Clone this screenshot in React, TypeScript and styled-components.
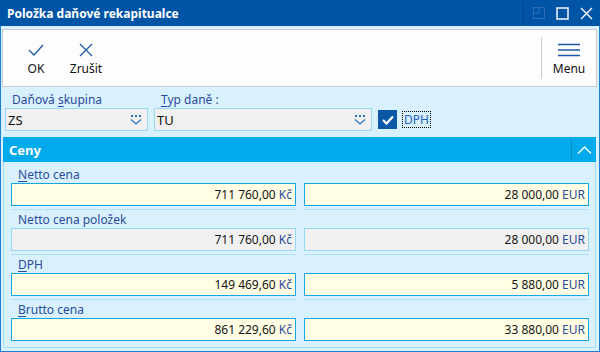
import React from 'react'
import styled, { createGlobalStyle } from 'styled-components'

const GlobalStyle = createGlobalStyle`
  html, body {
    margin: 0;
    padding: 0;
    width: 600px;
    height: 352px;
    overflow: hidden;
    font-family: 'Segoe UI', 'Noto Sans', sans-serif;
  }
`

type Row = {
  label: string
  key?: number
  czk: string
  eur: string
  readOnly?: boolean
}

const rows: Row[] = [
  { label: 'Netto cena', key: 0, czk: '711 760,00', eur: '28 000,00' },
  { label: 'Netto cena položek', czk: '711 760,00', eur: '28 000,00', readOnly: true },
  { label: 'DPH', key: 0, czk: '149 469,60', eur: '5 880,00' },
  { label: 'Brutto cena', key: 0, czk: '861 229,60', eur: '33 880,00' }
]

// underline the access key letter of a label
const withKey = (text: string, key?: number) => {
  if (key === undefined) return text
  return (
    <>
      {text.slice(0, key)}
      <u>{text[key]}</u>
      {text.slice(key + 1)}
    </>
  )
}

const ComboArrow = () => (
  <svg width="12" height="10" viewBox="0 0 12 10">
    <rect x="1" y="0" width="2" height="2" fill="#2f6fc4" />
    <rect x="5" y="0" width="2" height="2" fill="#2f6fc4" />
    <rect x="9" y="0" width="2" height="2" fill="#2f6fc4" />
    <path d="M1 4.5 L6 9 L11 4.5" fill="none" stroke="#2f6fc4" strokeWidth="1.2" />
  </svg>
)

const App = () => (
  <>
    <GlobalStyle />
    <Window>
      <TitleBar>
        <Title>Položka daňové rekapitualce</Title>
        <TitleButtons>
          <TitleSep />
          <svg width="12" height="12" viewBox="0 0 12 12">
            <rect x="0.5" y="0.5" width="11" height="11" fill="none" stroke="#2e6db3" />
            <path d="M6 0.5 V6 H0.5" fill="none" stroke="#2e6db3" />
          </svg>
          <svg width="13" height="13" viewBox="0 0 13 13">
            <rect x="1" y="1" width="11" height="11" fill="none" stroke="#e8eef7" strokeWidth="1.6" />
          </svg>
          <svg width="13" height="13" viewBox="0 0 13 13">
            <path d="M1 1 L12 12 M12 1 L1 12" stroke="#ffffff" strokeWidth="1.4" />
          </svg>
        </TitleButtons>
      </TitleBar>

      <Toolbar>
        <ToolButton>
          <svg width="16" height="14" viewBox="0 0 16 14">
            <path d="M1 7 L6 12 L15 2" fill="none" stroke="#1d5aa8" strokeWidth="1.3" />
          </svg>
          <span>OK</span>
        </ToolButton>
        <ToolButton>
          <svg width="14" height="14" viewBox="0 0 14 14">
            <path d="M1 1 L13 13 M13 1 L1 13" fill="none" stroke="#1d5aa8" strokeWidth="1.3" />
          </svg>
          <span>Zrušit</span>
        </ToolButton>
        <ToolSpacer />
        <ToolSep />
        <ToolButton $wide>
          <svg width="22" height="14" viewBox="0 0 22 14">
            <path d="M0 1.5 H22 M0 7 H22 M0 12.5 H22" stroke="#1d5aa8" strokeWidth="1.4" />
          </svg>
          <span>Menu</span>
        </ToolButton>
      </Toolbar>

      <FilterRow>
        <FilterField $width={143}>
          <FieldLabel>Daňová <u>s</u>kupina</FieldLabel>
          <Combo>
            ZS
            <ComboArrow />
          </Combo>
        </FilterField>
        <FilterField $width={218}>
          <FieldLabel><u>T</u>yp daně :</FieldLabel>
          <Combo>
            TU
            <ComboArrow />
          </Combo>
        </FilterField>
        <CheckWrap>
          <CheckBox>
            <svg width="12" height="10" viewBox="0 0 12 10">
              <path d="M1 5 L4.5 8.5 L11 1.5" fill="none" stroke="#ffffff" strokeWidth="2.2" />
            </svg>
          </CheckBox>
          <CheckLabel>DPH</CheckLabel>
        </CheckWrap>
      </FilterRow>

      <SectionHeader>
        <SectionTitle>Ceny</SectionTitle>
        <CollapseButton>
          <svg width="15" height="8" viewBox="0 0 15 8">
            <path d="M1 7.5 L7.5 1 L14 7.5" fill="none" stroke="#ffffff" strokeWidth="1.4" />
          </svg>
        </CollapseButton>
      </SectionHeader>

      <Panel>
        {rows.map((r, i) => (
          <PriceRow key={r.label} $last={i === rows.length - 1}>
            <Cell>
              <FieldLabel>{withKey(r.label, r.key)}</FieldLabel>
              <Amount $readOnly={r.readOnly}>
                {r.czk} <Currency>Kč</Currency>
              </Amount>
            </Cell>
            <Cell>
              <FieldLabel />
              <Amount $readOnly={r.readOnly}>
                {r.eur} <Currency>EUR</Currency>
              </Amount>
            </Cell>
          </PriceRow>
        ))}
      </Panel>
    </Window>
  </>
)

const Window = styled.div`
  box-sizing: border-box;
  width: 600px;
  height: 352px;
  border: 1px solid #1f7fd6;
  border-top: none;
  background: #d9f1fc;
  display: flex;
  flex-direction: column;
`
const TitleBar = styled.div`
  height: 26px;
  flex-shrink: 0;
  margin: 0 -1px;
  background: #0054a6;
  display: flex;
  align-items: center;
  padding-left: 7px;
`
const Title = styled.div`
  color: #ffffff;
  font-weight: bold;
  font-size: 12px;
  flex: 1;
`
const TitleButtons = styled.div`
  display: flex;
  align-items: center;
  gap: 11px;
  height: 100%;
  padding-right: 7px;
`
const TitleSep = styled.div`
  width: 1px;
  height: 24px;
  background: #00438a;
  margin-right: -2px;
`
const Toolbar = styled.div`
  box-sizing: border-box;
  height: 58px;
  margin: 3px 2px 0 1px;
  background: #fdfdfd;
  border: 1px solid #c9cdd1;
  display: flex;
  align-items: stretch;
  padding-left: 8px;
  flex-shrink: 0;
`
const ToolButton = styled.div<{ $wide?: boolean }>`
  width: ${({ $wide }) => ($wide ? '54px' : '50px')};
  display: flex;
  flex-direction: column;
  align-items: center;
  justify-content: flex-start;
  padding-top: 13px;
  font-size: 12px;
  color: #111111;
  svg {
    height: 14px;
    margin-bottom: 3px;
  }
`
const ToolSpacer = styled.div`
  flex: 1;
`
const ToolSep = styled.div`
  width: 1px;
  background: #c9cdd1;
  margin: 7px 0 7px;
`
const FilterRow = styled.div`
  display: flex;
  align-items: flex-end;
  gap: 6px;
  padding: 3px 0 0 4px;
  flex-shrink: 0;
`
const FilterField = styled.div<{ $width: number }>`
  width: ${({ $width }) => $width}px;
  display: flex;
  flex-direction: column;
`
const FieldLabel = styled.div`
  height: 18px;
  box-sizing: border-box;
  padding: 2px 0 0 7px;
  font-size: 12px;
  line-height: 15px;
  color: #2a4c9c;
  white-space: nowrap;
  u {
    text-underline-offset: 2px;
  }
`
const Combo = styled.div`
  box-sizing: border-box;
  height: 23px;
  background: #f0f0f0;
  border: 1px solid #9bd8f3;
  display: flex;
  align-items: center;
  justify-content: space-between;
  padding: 0 5px 0 2px;
  font-size: 13px;
  color: #111111;
`
const CheckWrap = styled.div`
  display: flex;
  align-items: center;
  gap: 5px;
  height: 23px;
  margin-left: 0;
`
const CheckBox = styled.div`
  width: 19px;
  height: 19px;
  background: #0b58a6;
  display: flex;
  align-items: center;
  justify-content: center;
`
const CheckLabel = styled.div`
  font-size: 12px;
  color: #1f62c4;
  border: 1px dotted #000000;
  padding: 0 1px;
  line-height: 15px;
`
const SectionHeader = styled.div`
  height: 25px;
  margin: 6px 3px 0 2px;
  background: #00aaeb;
  display: flex;
  align-items: center;
  flex-shrink: 0;
`
const SectionTitle = styled.div`
  flex: 1;
  padding-left: 6px;
  color: #ffffff;
  font-weight: bold;
  font-size: 13px;
`
const CollapseButton = styled.div`
  width: 24px;
  height: 21px;
  border-left: 1px solid #0a8bc4;
  display: flex;
  align-items: center;
  justify-content: center;
`
const Panel = styled.div`
  box-sizing: border-box;
  margin: 0 3px 0 2px;
  height: 186px;
  border: 1px solid #a6dcf4;
  border-top: none;
  padding: 3px 0 0 7px;
  flex-shrink: 0;
`
const PriceRow = styled.div<{ $last?: boolean }>`
  display: grid;
  grid-template-columns: 285px 285px;
  column-gap: 8px;
  & > div {
    border-bottom: ${({ $last }) => ($last ? 'none' : '1px solid #b2e2f7')};
  }
`
const Cell = styled.div`
  display: flex;
  flex-direction: column;
  padding-bottom: 3px;
`
const Amount = styled.div<{ $readOnly?: boolean }>`
  box-sizing: border-box;
  height: 23px;
  background: ${({ $readOnly }) => ($readOnly ? '#f0f0f0' : '#fffde3')};
  border: 1px solid ${({ $readOnly }) => ($readOnly ? '#95d9f4' : '#15a6e6')};
  display: flex;
  align-items: center;
  justify-content: flex-end;
  padding-right: 3px;
  font-size: 12px;
  color: #151515;
  white-space: pre;
`
const Currency = styled.span`
  color: #2a4c9c;
`

export default App
